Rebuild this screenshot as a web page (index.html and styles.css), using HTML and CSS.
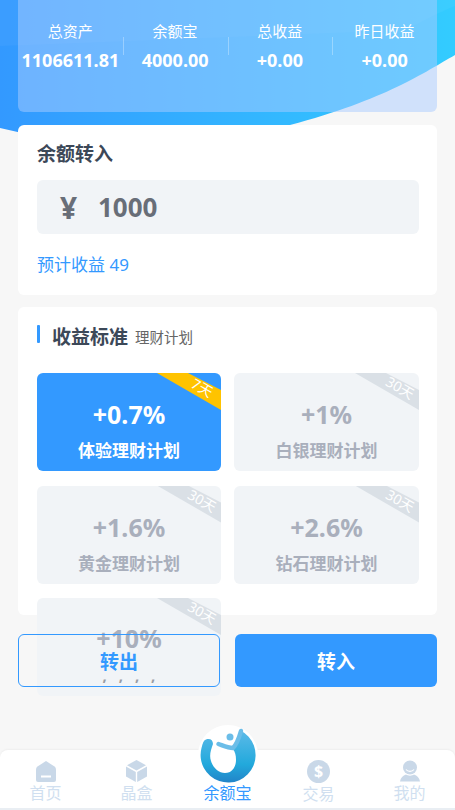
FILE: index.html
```html
<!DOCTYPE html>
<html lang="zh-CN">
<head>
  <meta charset="UTF-8">
  <meta name="viewport" content="width=device-width, initial-scale=1.0">
  <title>余额宝</title>
  <link rel="stylesheet" href="styles.css">
</head>
<body>
  <div class="page">
    <svg class="header-bg" width="455" height="140" viewBox="0 0 455 140">
      <defs>
        <linearGradient id="headerGrad" x1="0" y1="0" x2="1" y2="0">
          <stop offset="0" stop-color="#3399ff"/>
          <stop offset="1" stop-color="#33ccff"/>
        </linearGradient>
      </defs>
      <path d="M0 0H455V55C425 72 385 100 290 125L53 140L0 128Z" fill="url(#headerGrad)"/>
      <path d="M0 0H455V6C440 12 425 20 405 30L0 46Z" fill="#fff" opacity="0.04"/>
    </svg>

    <section class="stats">
      <div class="stat"><span class="stat-label">总资产</span><span class="stat-value">1106611.81</span></div>
      <div class="stat"><span class="stat-label">余额宝</span><span class="stat-value">4000.00</span></div>
      <div class="stat"><span class="stat-label">总收益</span><span class="stat-value">+0.00</span></div>
      <div class="stat"><span class="stat-label">昨日收益</span><span class="stat-value">+0.00</span></div>
    </section>

    <section class="card transfer">
      <h2 class="transfer-title">余额转入</h2>
      <div class="amount"><span class="amount-sign">¥</span><span class="amount-value">1000</span></div>
      <p class="estimate">预计收益 49</p>
    </section>

    <section class="card plans">
      <div class="plans-head">
        <h2 class="plans-title">收益标准</h2>
        <span class="plans-sub">理财计划</span>
      </div>
      <div class="plan-grid">
        <div class="plan active">
          <span class="ribbon"></span><span class="ribbon-text">7天</span>
          <div class="plan-rate">+0.7%</div>
          <div class="plan-name">体验理财计划</div>
        </div>
        <div class="plan">
          <span class="ribbon"></span><span class="ribbon-text">30天</span>
          <div class="plan-rate">+1%</div>
          <div class="plan-name">白银理财计划</div>
        </div>
        <div class="plan">
          <span class="ribbon"></span><span class="ribbon-text">30天</span>
          <div class="plan-rate">+1.6%</div>
          <div class="plan-name">黄金理财计划</div>
        </div>
        <div class="plan">
          <span class="ribbon"></span><span class="ribbon-text">30天</span>
          <div class="plan-rate">+2.6%</div>
          <div class="plan-name">钻石理财计划</div>
        </div>
        <div class="plan">
          <span class="ribbon"></span><span class="ribbon-text">30天</span>
          <div class="plan-rate last">+10%</div>
          <div class="plan-ticks">, , , ,</div>
        </div>
      </div>
    </section>

    <div class="actions">
      <button class="btn btn-out">转出</button>
      <button class="btn btn-in">转入</button>
    </div>

    <nav class="tabbar">
      <a class="tab">
        <svg width="20" height="22" viewBox="0 0 20 22"><path d="M10 1L18.500 6.500Q20 7.500 20 9.500V20Q20 22 18 22H2Q0 22 0 20V9.500Q0 7.500 1.500 6.500Z" fill="#c9d8e8"/><rect x="5" y="15.500" width="10" height="2" fill="#fff"/></svg>
        <span>首页</span>
      </a>
      <a class="tab">
        <svg width="21" height="22" viewBox="0 0 21 22"><path d="M10.500 0L20 5.200L10.500 10.500L1 5.200Z" fill="#c9d8e8"/><path d="M0 6.500L9.800 12V22L0 16.500Z" fill="#c9d8e8"/><path d="M21 6.500L11.200 12V22L21 16.500Z" fill="#c9d8e8"/></svg>
        <span>晶盒</span>
      </a>
      <a class="tab tab-main">
        <svg class="logo" width="60" height="60" viewBox="0 0 60 60">
          <defs>
            <linearGradient id="logoGrad" x1="0" y1="0" x2="0" y2="1">
              <stop offset="0" stop-color="#5cbae8"/>
              <stop offset="0.65" stop-color="#22a9dc"/>
              <stop offset="1" stop-color="#2284c8"/>
            </linearGradient>
          </defs>
          <circle cx="30" cy="30" r="30" fill="#fff"/>
          <path d="M42.500 5.500A27.500 27.500 0 1 1 3.500 23C4.500 18 6 15 8 14.500C12 13 15 15 15 19C13 25 11 30 13 36C15 43 21 48 27 48C34 48 38 42 38 35C38 30 37 27 35 24C39 20 41 14 42.500 5.500Z" fill="url(#logoGrad)"/>
          <path d="M20.500 19C26 21 30 23 35 23C39 19 41 13 43 6" fill="none" stroke="#6bbde8" stroke-width="4.500" stroke-linecap="round"/>
          <circle cx="32" cy="12" r="3.500" fill="#6bbde8"/>
        </svg>
        <span>余额宝</span>
      </a>
      <a class="tab">
        <svg width="23" height="23" viewBox="0 0 23 23"><circle cx="11.500" cy="11.500" r="11.500" fill="#c9d8e8"/><text class="coin" x="11.500" y="17" text-anchor="middle">$</text></svg>
        <span>交易</span>
      </a>
      <a class="tab">
        <svg width="20" height="22" viewBox="0 0 20 22"><circle cx="10" cy="7.500" r="7" fill="#c9d8e8"/><path d="M6 9.500C8 12 12 12 14 9.500" fill="none" stroke="#fff" stroke-width="1.200"/><path d="M6 14.500C8 16 12 16 14 14.500C17 15.500 19.500 18 20 21.500H0C0.500 18 3 15.500 6 14.500Z" fill="#c9d8e8"/></svg>
        <span>我的</span>
      </a>
    </nav>
  </div>
</body>
</html>
```

FILE: styles.css
```css
* { box-sizing: border-box; }
html, body {
  margin: 0;
  padding: 0;
}
body {
  font-family: "Noto Sans", "Noto Sans CJK SC", sans-serif;
  background: #f7f7f7;
}
.page {
  position: relative;
  width: 455px;
  height: 810px;
  overflow: hidden;
  padding: 0 18px;
}
.header-bg {
  position: absolute;
  top: 0;
  left: 0;
}

/* top glass panel */
.stats {
  position: relative;
  display: grid;
  grid-template-columns: repeat(4, 1fr);
  height: 112px;
  padding-top: 21px;
  background: rgba(169, 204, 255, 0.5);
  border-radius: 0 0 6px 6px;
  color: #fff;
}
.stat {
  position: relative;
  display: flex;
  flex-direction: column;
  align-items: center;
}
.stat + .stat::before {
  content: "";
  position: absolute;
  left: 0;
  top: 16px;
  height: 18px;
  width: 1px;
  background: rgba(255, 255, 255, 0.3);
}
.stat-label {
  font-size: 15px;
  line-height: 20px;
}
.stat-value {
  margin-top: 7px;
  font-size: 18px;
  font-weight: 700;
  line-height: 24px;
  white-space: nowrap;
}

.card {
  position: relative;
  background: #fff;
  border-radius: 6px;
}
.transfer {
  height: 170px;
  margin-top: 13px;
  padding: 17px 18px 0 19px;
}
.transfer-title {
  margin: 0;
  font-size: 19px;
  line-height: 24px;
  font-weight: 700;
  color: #3c4858;
}
.amount {
  display: flex;
  align-items: center;
  height: 54px;
  margin-top: 14px;
  padding-left: 23px;
  background: #f1f4f7;
  border-radius: 6px;
  color: #686e78;
  font-weight: 700;
}
.amount-sign {
  font-size: 30px;
  width: 38px;
}
.amount-value {
  font-size: 26px;
}
.estimate {
  margin: 20px 0 0;
  font-size: 17px;
  line-height: 22px;
  color: #3399ff;
}

.plans {
  height: 308px;
  margin-top: 12px;
  padding: 17px 18px 0 19px;
}
.plans-head {
  position: relative;
  display: flex;
  align-items: center;
  height: 24px;
  padding-left: 15px;
}
.plans-head::before {
  content: "";
  position: absolute;
  left: 0;
  top: 1px;
  width: 3px;
  height: 18px;
  background: #3399ff;
  border-radius: 1px;
}
.plans-title {
  margin: 0;
  font-size: 19px;
  font-weight: 700;
  color: #3c4858;
}
.plans-sub {
  margin-left: 7px;
  font-size: 14.500px;
  color: #666;
}
.plan-grid {
  display: grid;
  grid-template-columns: 184px 185px;
  grid-auto-rows: 98px;
  column-gap: 13px;
  row-gap: 14.500px;
  margin-top: 25px;
}
.plan {
  position: relative;
  overflow: hidden;
  display: flex;
  flex-direction: column;
  align-items: center;
  background: #f1f4f7;
  border-radius: 6px;
  color: #a9afbc;
  font-weight: 700;
}
.plan.active {
  background: #3399ff;
  color: #fff;
}
.plan-rate {
  margin-top: 24px;
  font-size: 25px;
  line-height: 34px;
}
.plan-rate.last {
  margin-top: 23px;
}
.plan-name {
  margin-top: 9px;
  font-size: 17px;
  line-height: 22px;
}
.plan-ticks {
  margin-top: 9px;
  font-size: 15px;
  line-height: 22px;
  word-spacing: 8px;
  color: #9a9da3;
}
.ribbon {
  position: absolute;
  top: 0;
  right: 0;
  width: 64px;
  height: 37px;
  background: #dae0e6;
  clip-path: polygon(0 0, 31px 0, 64px 17px, 64px 37px);
}
.active .ribbon {
  background: #ffc300;
}
.ribbon-text {
  position: absolute;
  top: 5px;
  right: -3px;
  width: 44px;
  font-size: 14px;
  font-weight: 400;
  line-height: 20px;
  text-align: center;
  color: #fff;
  transform: rotate(30deg);
}

/* bottom buttons sit over the list */
.actions {
  position: absolute;
  left: 18px;
  right: 18px;
  top: 634px;
  display: grid;
  grid-template-columns: 202px 202px;
  justify-content: space-between;
}
.btn {
  height: 53px;
  border-radius: 6px;
  font-family: inherit;
  font-size: 19px;
  font-weight: 700;
  padding: 0;
}
.btn-out {
  background: transparent;
  border: 1px solid #3399ff;
  color: #3399ff;
}
.btn-in {
  background: #3399ff;
  border: 0;
  color: #fff;
}

.tabbar {
  position: absolute;
  left: 0;
  right: 0;
  bottom: 0;
  display: grid;
  grid-template-columns: repeat(5, 91px);
  height: 60px;
  background: #fff;
  border-radius: 8px 8px 0 0;
  border-bottom: 2px solid #e9eef3;
  box-shadow: 0 -1px 2px rgba(0, 0, 0, 0.04);
}
.tab {
  position: relative;
  display: flex;
  flex-direction: column;
  align-items: center;
  padding-top: 10px;
  font-size: 16px;
  line-height: 20px;
  color: #d0dff0;
}
.tab span {
  margin-top: 1px;
}
.tab-main {
  color: #3399ff;
  padding-top: 32px;
}
.logo {
  position: absolute;
  top: -25px;
  left: 16px;
}
.coin {
  font-family: "Noto Sans", sans-serif;
  font-size: 16px;
  font-weight: 700;
  fill: #fff;
}
```
